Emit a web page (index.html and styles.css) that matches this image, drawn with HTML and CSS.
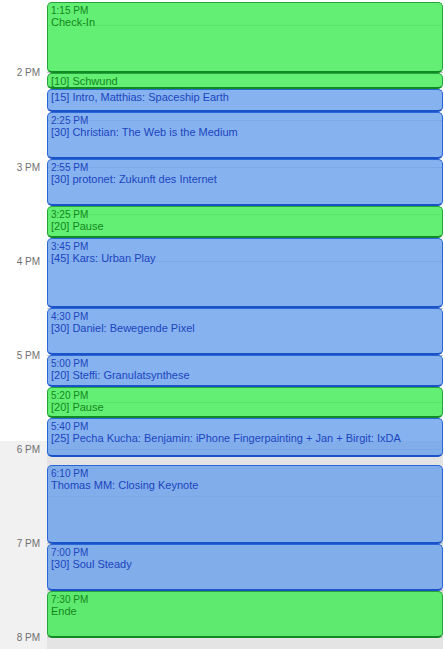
FILE: index.html
```html
<!DOCTYPE html>
<html>
<head>
<meta charset="utf-8">
<link rel="stylesheet" href="styles.css">
</head>
<body>
<div class="day">
  <div class="gutter">
    <div class="hour">2 PM</div>
    <div class="hour">3 PM</div>
    <div class="hour">4 PM</div>
    <div class="hour">5 PM</div>
    <div class="hour">6 PM</div>
    <div class="hour">7 PM</div>
    <div class="hour last">8 PM</div>
  </div>
  <div class="events">
    <div class="event green" style="height:70.6px"><div class="time">1:15 PM</div><div class="title">Check-In</div></div>
    <div class="event green short" style="height:15.7px"><div class="title">[10] Schwund</div></div>
    <div class="event blue short" style="height:23.5px"><div class="title">[15] Intro, Matthias: Spaceship Earth</div></div>
    <div class="event blue" style="height:47.1px"><div class="time">2:25 PM</div><div class="title">[30] Christian: The Web is the Medium</div></div>
    <div class="event blue" style="height:47.1px"><div class="time">2:55 PM</div><div class="title">[30] protonet: Zukunft des Internet</div></div>
    <div class="event green" style="height:31.4px"><div class="time">3:25 PM</div><div class="title">[20] Pause</div></div>
    <div class="event blue" style="height:70.6px"><div class="time">3:45 PM</div><div class="title">[45] Kars: Urban Play</div></div>
    <div class="event blue" style="height:47.1px"><div class="time">4:30 PM</div><div class="title">[30] Daniel: Bewegende Pixel</div></div>
    <div class="event blue" style="height:31.4px"><div class="time">5:00 PM</div><div class="title">[20] Steffi: Granulatsynthese</div></div>
    <div class="event green" style="height:31.4px"><div class="time">5:20 PM</div><div class="title">[20] Pause</div></div>
    <div class="event blue" style="height:39.2px"><div class="time">5:40 PM</div><div class="title">[25] Pecha Kucha: Benjamin: iPhone Fingerpainting + Jan + Birgit: IxDA</div></div>
    <div class="event blue gap" style="height:78.5px"><div class="time">6:10 PM</div><div class="title">Thomas MM: Closing Keynote</div></div>
    <div class="event blue" style="height:47.1px"><div class="time">7:00 PM</div><div class="title">[30] Soul Steady</div></div>
    <div class="event green" style="height:47.1px"><div class="time">7:30 PM</div><div class="title">Ende</div></div>
  </div>
</div>
</body>
</html>
```
FILE: styles.css
```css
html, body {
  margin: 0;
  padding: 0;
  height: 649px;
  overflow: hidden;
  background: #ffffff;
  font-family: "Liberation Sans", Arial, sans-serif;
}

.day {
  display: flex;
  height: 649px;
  overflow: hidden;
}

.gutter {
  width: 47px;
  flex: none;
  padding-top: 25.9px;
  box-sizing: border-box;
  overflow: hidden;
  background: linear-gradient(to bottom, #ffffff 0, #ffffff 441px, #f1f1f1 441px, #f1f1f1 100%);
}

.hour {
  height: 94.17px;
  display: flex;
  align-items: center;
  justify-content: flex-end;
  padding-right: 7px;
  font-size: 10px;
  color: #707070;
}

.events {
  flex: 1;
  margin-right: 2px;
  padding-top: 2.4px;
  display: flex;
  flex-direction: column;
  overflow: hidden;
  background:
    repeating-linear-gradient(to bottom, transparent 0, transparent 25.4px, #c9c9c9 25.4px, #c9c9c9 26.4px, transparent 26.4px, transparent 47.083px),
    linear-gradient(to bottom, #ffffff 0, #ffffff 441px, #e4e4e4 441px, #e4e4e4 100%);
}

.event {
  flex: none;
  box-sizing: border-box;
  border: 1px solid;
  border-bottom-width: 2px;
  border-radius: 5px;
  padding: 3px 0 0 3px;
  overflow: hidden;
  white-space: nowrap;
}

.event.short {
  padding-top: 1px;
}

.event.gap {
  margin-top: 7.8px;
}

.green {
  background: rgba(64, 235, 86, 0.82);
  border-color: #26a33a;
  border-bottom-color: #118a25;
  color: #14871c;
}

.blue {
  background: rgba(107, 161, 237, 0.82);
  border-color: #2a66d6;
  border-bottom-color: #1a52c8;
  color: #1b45bd;
}

.time {
  font-size: 10px;
  line-height: 10px;
}

.title {
  font-size: 11px;
  line-height: 13px;
}
```
